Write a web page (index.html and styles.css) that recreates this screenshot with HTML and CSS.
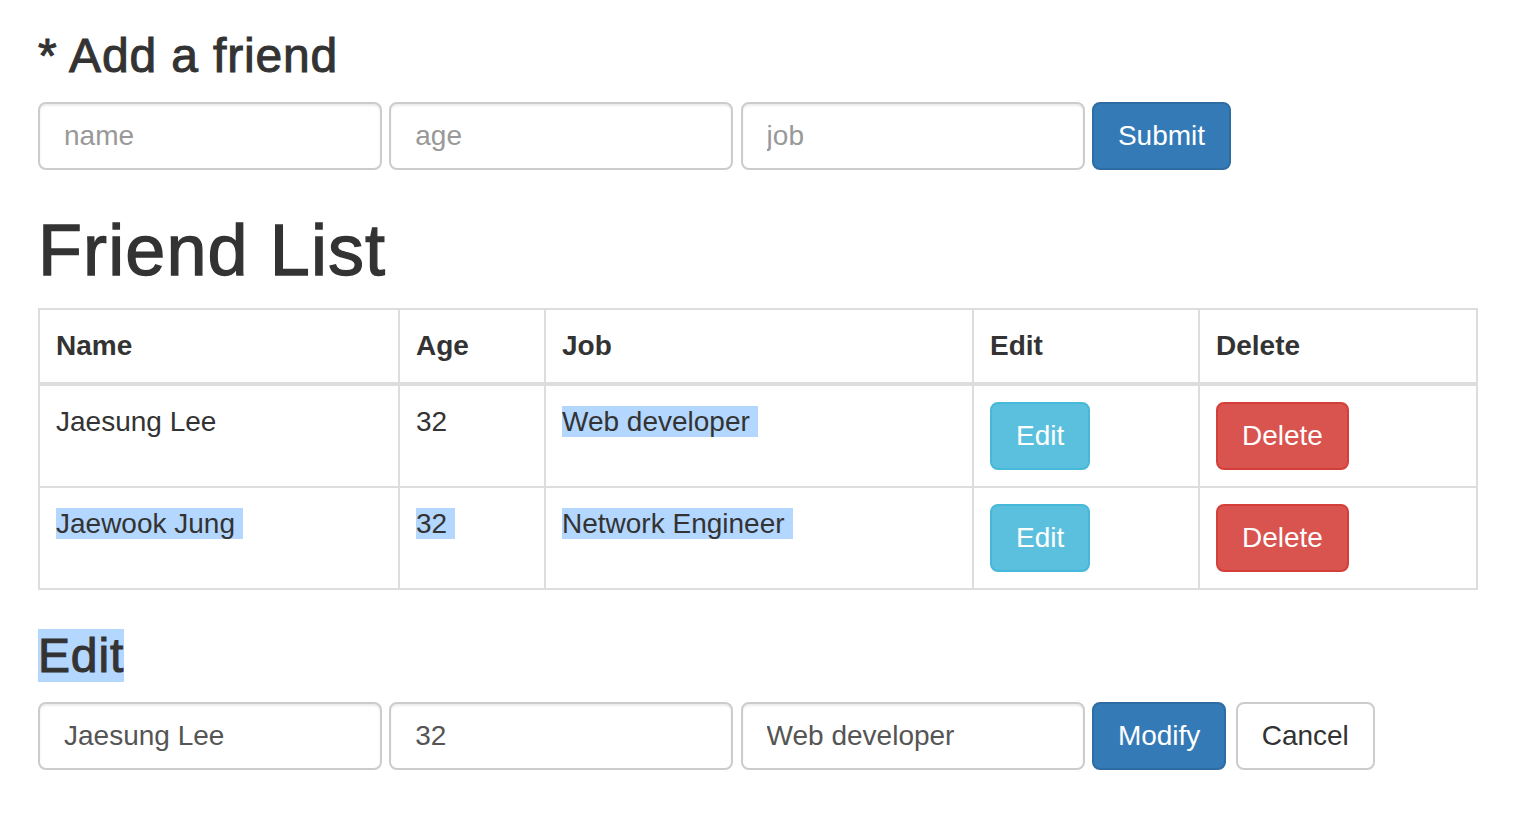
FILE: index.html
```html
<!DOCTYPE html>
<html lang="en">
<head>
<meta charset="utf-8">
<title>Friend List</title>
<link rel="stylesheet" href="styles.css">
</head>
<body>
<main class="page">
  <h3 class="title-sm title-add">* Add a friend</h3>
  <form class="form-row">
    <input class="field" type="text" placeholder="name">
    <input class="field" type="text" placeholder="age">
    <input class="field" type="text" placeholder="job">
    <button class="btn btn-primary" type="button">Submit</button>
  </form>

  <h1 class="title-lg">Friend List</h1>
  <table class="friends">
    <colgroup>
      <col class="c-name">
      <col class="c-age">
      <col class="c-job">
      <col class="c-edit">
      <col class="c-del">
    </colgroup>
    <thead>
      <tr><th>Name</th><th>Age</th><th>Job</th><th>Edit</th><th>Delete</th></tr>
    </thead>
    <tbody>
      <tr>
        <td>Jaesung Lee</td>
        <td>32</td>
        <td><span class="sel">Web developer</span></td>
        <td><button class="btn btn-info" type="button">Edit</button></td>
        <td><button class="btn btn-danger" type="button">Delete</button></td>
      </tr>
      <tr>
        <td><span class="sel">Jaewook Jung</span></td>
        <td><span class="sel">32</span></td>
        <td><span class="sel">Network Engineer</span></td>
        <td><button class="btn btn-info" type="button">Edit</button></td>
        <td><button class="btn btn-danger" type="button">Delete</button></td>
      </tr>
    </tbody>
  </table>

  <h3 class="title-sm"><span class="sel-head">Edit</span></h3>
  <form class="form-row">
    <input class="field" type="text" value="Jaesung Lee">
    <input class="field" type="text" value="32">
    <input class="field" type="text" value="Web developer">
    <button class="btn btn-primary" type="button">Modify</button>
    <button class="btn btn-default btn-cancel" type="button">Cancel</button>
  </form>
</main>
</body>
</html>
```

FILE: styles.css
```css
* { box-sizing: border-box; }

html, body {
  margin: 0;
  padding: 0;
  background: #fff;
}

body {
  font-family: "Liberation Sans", Arial, Helvetica, sans-serif;
  font-size: 28px;
  line-height: 40px;
  color: #333;
}

.page {
  padding: 30px 38px 0 38px;
}

.title-sm {
  margin: 0 0 19.2px 0;
  font-size: 48px;
  line-height: 52.8px;
  font-weight: 400;
  letter-spacing: 0.85px;
  -webkit-text-stroke: 1px #333;
  color: #333;
}

.title-lg {
  margin: 41.4px 0 17.4px 0;
  font-size: 72px;
  line-height: 79.2px;
  font-weight: 400;
  letter-spacing: 1.1px;
  -webkit-text-stroke: 1.3px #333;
  color: #333;
}

.form-row {
  display: flex;
  align-items: center;
  gap: 7.3px;
  margin: 0;
}

.field {
  width: 344px;
  height: 68px;
  padding: 12px 24px;
  font-family: "Liberation Sans", Arial, Helvetica, sans-serif;
  font-size: 28px;
  line-height: 40px;
  color: #555;
  background: #fff;
  border: 2px solid #ccc;
  border-radius: 8px;
  box-shadow: inset 0 2px 2px rgba(0, 0, 0, 0.075);
  outline: none;
}

.field::placeholder {
  color: #999;
  opacity: 1;
}

.btn {
  display: inline-block;
  height: 68px;
  padding: 12px 24px;
  font-family: "Liberation Sans", Arial, Helvetica, sans-serif;
  font-size: 28px;
  line-height: 40px;
  font-weight: 400;
  border: 2px solid transparent;
  border-radius: 8px;
  white-space: nowrap;
  cursor: pointer;
}

.btn-primary { color: #fff; background: #337ab7; border-color: #2e6da4; }
.btn-info    { color: #fff; background: #5bc0de; border-color: #46b8da; }
.btn-danger  { color: #fff; background: #d9534f; border-color: #d43f3a; }
.btn-default { color: #333; background: #fff;    border-color: #ccc; }

.btn-cancel { margin-left: 2px; }

.friends {
  width: 1438px;
  table-layout: fixed;
  border-collapse: collapse;
  border-spacing: 0;
  margin: 0 0 40px 0;
}

.c-name { width: 360px; }
.c-age  { width: 146px; }
.c-job  { width: 428px; }
.c-edit { width: 226px; }
.c-del  { width: 278px; }

.friends th,
.friends td {
  padding: 16px;
  border: 2px solid #ddd;
  text-align: left;
  line-height: 40px;
}

.friends th {
  vertical-align: bottom;
  font-weight: 700;
  border-bottom-width: 4px;
}

.friends td {
  vertical-align: top;
}

.sel {
  background: #b3d7fe;
  padding-right: 8px;
}

.sel-head {
  background: #b3d7fe;
}
```
